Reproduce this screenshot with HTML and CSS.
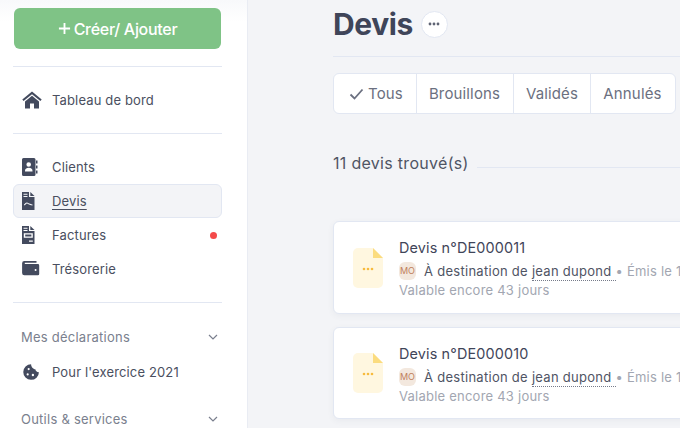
FILE: index.html
```html
<!DOCTYPE html>
<html lang="fr">
<head>
<meta charset="utf-8">
<title>Devis</title>
<link rel="stylesheet" href="styles.css">
</head>
<body>
<div class="app">
  <aside class="sidebar">
    <a class="create"><svg class="plus" viewBox="0 0 14 14"><path d="M7 1v12M1 7h12"/></svg>Créer/ Ajouter</a>
    <hr class="sep sep-a">
    <nav class="group">
      <a class="item"><svg class="ico" viewBox="0 0 20 18"><path d="M10 0.5 0.3 8.6l1.3 1.5L10 3.2l8.4 6.9 1.3-1.5z"/><path d="M10 4.800 3 10.500V17.600h5v-5h4v5h5v-7.100z"/></svg><span>Tableau de bord</span></a>
    </nav>
    <hr class="sep sep-b">
    <nav class="group">
      <a class="item"><svg class="ico" viewBox="2 0 20 18"><path fill-rule="evenodd" d="M3.500 0H14a1.500 1.500 0 0 1 1.500 1.500v15A1.500 1.500 0 0 1 14 18H3.500A1.500 1.500 0 0 1 2 16.500v-15A1.500 1.500 0 0 1 3.500 0zM8.700 4.200a2.300 2.300 0 1 0 0 4.600 2.300 2.300 0 0 0 0-4.600zM5 13.500h7.500c.3-2.500-1.300-3.700-3.700-3.700S4.700 11 5 13.500z"/><path d="M16 2.500h1.500v3H16zM16 7.500h1.500v3H16zM16 12.500h1.500v3H16z"/></svg><span>Clients</span></a>
      <a class="item active"><svg class="ico" viewBox="3 0 20 18"><path fill-rule="evenodd" d="M3 0h7v5h5.500v13H3zM4.500 1.800v1h4v-1zM4.500 4v1h4v-1zM5 13.500c1.500-.2 2-2 3-2s1 1 2 1 1 1 3.500 1v-1c-1.800 0-1.800-1-3.300-1-.9 0-1.100-1-2.200-1-1.600 0-2.100 1.600-3 2z"/><path d="M11.300 0l4.200 3.900h-4.200z"/></svg><span class="underline">Devis</span></a>
      <a class="item"><svg class="ico" viewBox="3 0 20 18"><path fill-rule="evenodd" d="M3 0h7v5h5.500v13H3zM4.500 1.800v1h4v-1zM4.500 4v1h4v-1zM4.800 7.200v4.600h9V7.200zM6.200 8.400h6.200v2.200H6.200zM10 14.500v1.200h3.800v-1.200z"/><path d="M11.300 0l4.200 3.900h-4.200z"/></svg><span>Factures</span><i class="dot"></i></a>
      <a class="item"><svg class="ico" viewBox="0 0 22 20"><path fill-rule="evenodd" d="M2.500 1H16v2H3v1.500h14.500A1.500 1.500 0 0 1 19 6v9.500a1.500 1.500 0 0 1-1.500 1.500h-15A2.500 2.500 0 0 1 0 14.500v-11A2.500 2.500 0 0 1 2.500 1zM15 10a1.100 1.100 0 1 0 0 2.200A1.100 1.100 0 0 0 15 10z"/></svg><span>Trésorerie</span></a>
    </nav>
    <hr class="sep sep-c">
    <div class="heading"><span>Mes déclarations</span><svg class="chev" viewBox="0 0 10 6"><path d="M1 1l4 4 4-4"/></svg></div>
    <a class="item"><svg class="ico" viewBox="-1 -1 22 20"><path fill-rule="evenodd" d="M9 .3a8.700 8.700 0 1 0 8.700 8.900c-2.200.1-3.700-1.200-4-3.200C11.300 5.800 9 3 9 .3zM6.300 4.600a1.200 1.200 0 1 1 0 2.400 1.200 1.200 0 0 1 0-2.400zM5.200 10.500a1.200 1.200 0 1 1 0 2.400 1.200 1.200 0 0 1 0-2.400zM11 11a1.300 1.300 0 1 1 0 2.600 1.300 1.300 0 0 1 0-2.600z"/></svg><span>Pour l'exercice 2021</span></a>
    <div class="heading heading-last"><span>Outils &amp; services</span><svg class="chev" viewBox="0 0 10 6"><path d="M1 1l4 4 4-4"/></svg></div>
  </aside>
  <main class="main">
    <header class="title-row">
      <h1>Devis</h1>
      <button class="more"><svg viewBox="0 0 12 4"><circle cx="2" cy="2" r="1.400"/><circle cx="6" cy="2" r="1.400"/><circle cx="10" cy="2" r="1.400"/></svg></button>
    </header>
    <div class="tabs">
      <a class="tab tab-first"><svg class="check" viewBox="0 0 15 12"><path d="M1.500 6.500 5.500 10.500 13.500 1.500"/></svg>Tous</a>
      <a class="tab tab-b">Brouillons</a>
      <a class="tab tab-v">Validés</a>
      <a class="tab tab-a">Annulés</a>
    </div>
    <div class="count"><span>11 devis trouvé(s)</span><i></i></div>
    <article class="card">
      <svg class="doc" viewBox="0 0 30 40"><path class="doc-body" d="M5 0h15l10 10v25a5 5 0 0 1-5 5H5a5 5 0 0 1-5-5V5a5 5 0 0 1 5-5z"/><path class="doc-fold" d="M20 0l10 10H20z"/><circle class="doc-dot" cx="11" cy="21" r="1.300"/><circle class="doc-dot" cx="15" cy="21" r="1.300"/><circle class="doc-dot" cx="19" cy="21" r="1.300"/></svg>
      <div class="info">
        <div class="name">Devis n°DE000011</div>
        <div class="line"><span class="avatar">MO</span><span>À destination de <u>jean dupond</u></span><span class="muted">• Émis le 1</span></div>
        <div class="muted">Valable encore 43 jours</div>
      </div>
    </article>
    <article class="card card-second">
      <svg class="doc" viewBox="0 0 30 40"><path class="doc-body" d="M5 0h15l10 10v25a5 5 0 0 1-5 5H5a5 5 0 0 1-5-5V5a5 5 0 0 1 5-5z"/><path class="doc-fold" d="M20 0l10 10H20z"/><circle class="doc-dot" cx="11" cy="21" r="1.300"/><circle class="doc-dot" cx="15" cy="21" r="1.300"/><circle class="doc-dot" cx="19" cy="21" r="1.300"/></svg>
      <div class="info">
        <div class="name">Devis n°DE000010</div>
        <div class="line"><span class="avatar">MO</span><span>À destination de <u>jean dupond</u></span><span class="muted">• Émis le 1</span></div>
        <div class="muted">Valable encore 43 jours</div>
      </div>
    </article>
  </main>
</div>
</body>
</html>
```
FILE: styles.css
```css
* { box-sizing: border-box; }
html, body { margin: 0; height: 100%; overflow: hidden; }
body { font-family: Inter, "Liberation Sans", sans-serif; color: #4a4f60; background: #f3f4f7; }
.app { display: flex; width: 680px; height: 428px; overflow: hidden; }

.sidebar { width: 248px; flex: none; height: 428px; overflow: hidden; background: linear-gradient(#f8f9fb, #fff 22px); border-right: 1px solid #e9ecf3; padding: 8px 25px 0 13px; }
.create { display: flex; align-items: center; justify-content: center; gap: 3px; width: 207px; height: 41px; margin-left: 1px; background: #7fc386; border-radius: 6px; color: #fff; font-size: 16px; font-weight: 500; letter-spacing: -0.3px; }
.plus { width: 13px; height: 13px; fill: none; stroke: #fff; stroke-width: 2; }
.sep { height: 1px; border: 0; margin: 0; background: #e2e7f2; }
.sep-a { margin-top: 17px; }
.sep-b { margin-top: 16px; margin-bottom: 16px; }
.sep-c { margin-top: 16px; }
.group { display: flex; flex-direction: column; }
.sep-a + .group { padding-top: 16px; }
.item { display: flex; align-items: center; height: 34px; padding-left: 8px; font-size: 13px; letter-spacing: 0.14px; color: #4a4f60; border: 1px solid transparent; border-radius: 6px; }
.item span { margin-left: 10px; }
.item .ico { width: 20px; height: 18px; fill: #434a5e; flex: none; }
.active { background: #f3f4f7; border-color: #e2e7f2; }
.underline { text-decoration: underline; text-underline-offset: 3px; }
.dot { width: 7px; height: 7px; border-radius: 50%; background: #f44a4a; margin-left: auto; margin-right: 4px; }
.heading { display: flex; justify-content: space-between; align-items: center; font-size: 13px; letter-spacing: 0.24px; color: #7a7f8e; padding: 0 4px 0 8px; margin-top: 25px; height: 18px; }
.heading-last { margin-top: 21px; }
.chev { width: 10px; height: 6px; fill: none; stroke: #7a7f8e; stroke-width: 1.200; }
.sep-c + .heading + .item { margin-top: 9px; }

.main { flex: 1; min-width: 0; padding-left: 85px; }
.title-row { display: flex; align-items: center; gap: 8px; height: 57px; padding-bottom: 8px; border-bottom: 1px solid #e2e7f2; }
h1 { margin: 0; font-size: 30px; font-weight: 700; line-height: 48px; color: #3f4559; letter-spacing: -0.4px; }
.more { width: 27px; height: 27px; padding: 0; display: flex; align-items: center; justify-content: center; border-radius: 50%; background: #fff; border: 1px solid #e2e7f2; }
.more svg { width: 12px; height: 4px; fill: #5f6474; }
.tabs { display: inline-flex; height: 41px; margin-top: 16px; background: #fff; border: 1px solid #e2e7f2; border-radius: 6px; width: 343px; }
.tab { display: flex; align-items: center; justify-content: center; font-size: 15px; letter-spacing: 0.15px; color: #6b7080; height: 100%; flex: none; border-right: 1px solid #e2e7f2; }
.tab-first { width: 83px; gap: 4px; padding-left: 2px; }
.tab-b { width: 97px; padding-right: 1px; }
.tab-v { width: 77px; }
.tab-a { width: 84px; padding-right: 1px; border-right: 0; }
.check { width: 15px; height: 12px; fill: none; stroke: #6b7080; stroke-width: 1.800; }
.count { display: flex; align-items: center; gap: 8px; margin-top: 39px; height: 20px; font-size: 16px; letter-spacing: 0.3px; color: #4f5464; white-space: nowrap; }
.count i { flex: 1; height: 1px; margin-top: 8px; background: #e2e7f2; }

.card { display: flex; align-items: center; width: 420px; height: 93px; margin-top: 48px; padding-left: 19px; background: #fff; border: 1px solid #e2e7f2; border-radius: 6px; box-shadow: 0 2px 6px rgba(70, 80, 110, .06); }
.card-second { margin-top: 13px; height: 92px; }
.doc { width: 30px; height: 40px; flex: none; }
.doc-body { fill: #fff7e0; }
.doc-fold { fill: #fbdc7f; }
.doc-dot { fill: #f7bb3e; }
.info { margin-left: 16px; white-space: nowrap; padding-top: 1px; }
.name { font-size: 14.4px; line-height: 22px; color: #3f4559; letter-spacing: 0.15px; }
.line { display: flex; align-items: center; font-size: 13px; line-height: 20px; margin-top: 2px; letter-spacing: 0.28px; color: #4f5464; }
.line u { text-decoration: none; border-bottom: 1px dotted #767b8a; padding: 0 4px 1px 0; }
.muted { font-size: 13px; line-height: 18px; letter-spacing: 0.23px; color: #a2a6b1; }
.avatar { width: 17px; height: 18px; margin-right: 8px; display: flex; align-items: center; justify-content: center; background: #f3e8de; border-radius: 6px; font-size: 9px; letter-spacing: 0; color: #c07f5d; }
```
